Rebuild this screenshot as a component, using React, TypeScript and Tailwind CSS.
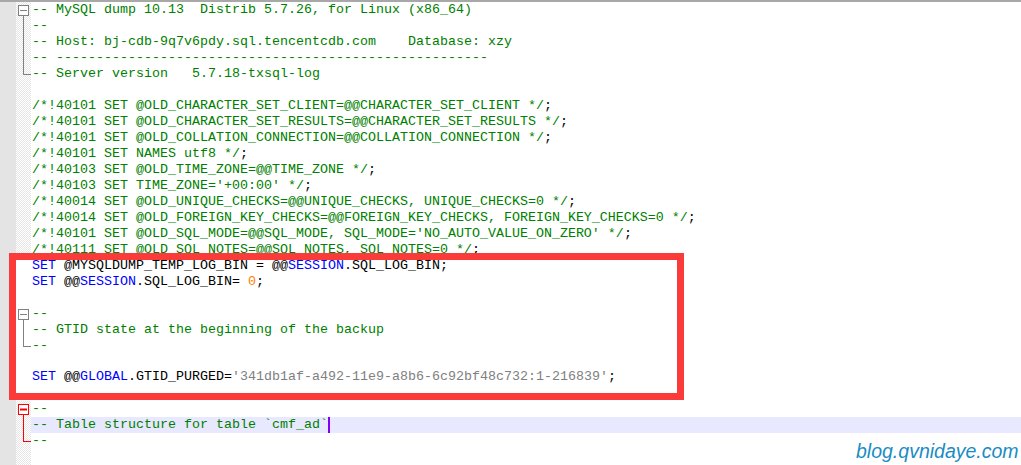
import * as React from "react"

type Seg = [string, string]
type Fold = "none" | "open" | "mid" | "end"

const G = "text-[#008000]"
const B = "text-[#0000ff]"
const K = "text-black"
const O = "text-[#ff8000]"
const S = "text-[#808080]"

const LINES: { segs: Seg[]; fold?: Fold; red?: boolean; clear?: boolean; current?: boolean }[] = [
  { segs: [[G, "-- MySQL dump 10.13  Distrib 5.7.26, for Linux (x86_64)"]], fold: "open" },
  { segs: [[G, "--"]], fold: "mid" },
  { segs: [[G, "-- Host: bj-cdb-9q7v6pdy.sql.tencentcdb.com    Database: xzy"]], fold: "mid" },
  { segs: [[G, "-- ------------------------------------------------------"]], fold: "mid" },
  { segs: [[G, "-- Server version   5.7.18-txsql-log"]], fold: "end" },
  { segs: [] },
  { segs: [[G, "/*!40101 SET @OLD_CHARACTER_SET_CLIENT=@@CHARACTER_SET_CLIENT */"], [K, ";"]] },
  { segs: [[G, "/*!40101 SET @OLD_CHARACTER_SET_RESULTS=@@CHARACTER_SET_RESULTS */"], [K, ";"]] },
  { segs: [[G, "/*!40101 SET @OLD_COLLATION_CONNECTION=@@COLLATION_CONNECTION */"], [K, ";"]] },
  { segs: [[G, "/*!40101 SET NAMES utf8 */"], [K, ";"]] },
  { segs: [[G, "/*!40103 SET @OLD_TIME_ZONE=@@TIME_ZONE */"], [K, ";"]] },
  { segs: [[G, "/*!40103 SET TIME_ZONE='+00:00' */"], [K, ";"]] },
  { segs: [[G, "/*!40014 SET @OLD_UNIQUE_CHECKS=@@UNIQUE_CHECKS, UNIQUE_CHECKS=0 */"], [K, ";"]] },
  { segs: [[G, "/*!40014 SET @OLD_FOREIGN_KEY_CHECKS=@@FOREIGN_KEY_CHECKS, FOREIGN_KEY_CHECKS=0 */"], [K, ";"]] },
  { segs: [[G, "/*!40101 SET @OLD_SQL_MODE=@@SQL_MODE, SQL_MODE='NO_AUTO_VALUE_ON_ZERO' */"], [K, ";"]] },
  { segs: [[G, "/*!40111 SET @OLD_SQL_NOTES=@@SQL_NOTES, SQL_NOTES=0 */"], [K, ";"]] },
  { segs: [[B, "SET"], [K, " @MYSQLDUMP_TEMP_LOG_BIN = @@"], [B, "SESSION"], [K, ".SQL_LOG_BIN;"]], clear: true },
  { segs: [[B, "SET"], [K, " @@"], [B, "SESSION"], [K, ".SQL_LOG_BIN= "], [O, "0"], [K, ";"]], clear: true },
  { segs: [], clear: true },
  { segs: [[G, "--"]], fold: "open", clear: true },
  { segs: [[G, "-- GTID state at the beginning of the backup"]], fold: "mid", clear: true },
  { segs: [[G, "--"]], fold: "end", clear: true },
  { segs: [], clear: true },
  {
    segs: [[B, "SET"], [K, " @@"], [B, "GLOBAL"], [K, ".GTID_PURGED="], [S, "'341db1af-a492-11e9-a8b6-6c92bf48c732:1-216839'"], [K, ";"]],
    clear: true,
  },
  { segs: [], clear: true },
  { segs: [[G, "--"]], fold: "open", red: true },
  { segs: [[G, "-- Table structure for table `cmf_ad`"]], fold: "mid", red: true, current: true },
  { segs: [[G, "--"]], fold: "end", red: true },
  { segs: [] },
]

function FoldMark({ kind, red }: { kind: Fold; red?: boolean }) {
  if (kind === "none") return null
  const c = red ? "#ff0000" : "#808080"
  return (
    <svg width="15" height="16" viewBox="0 0 15 16" className="block">
      {kind === "open" && (
        <>
          <line x1="7.5" y1="13" x2="7.5" y2="16" stroke={c} />
          <rect x="2.5" y="3.5" width="10" height="10" fill="#fff" stroke={c} />
          <line x1="4" y1="8.5" x2="11" y2="8.5" stroke={c} strokeWidth={red ? 2 : 1} />
        </>
      )}
      {kind === "mid" && <line x1="7.5" y1="0" x2="7.5" y2="16" stroke={c} />}
      {kind === "end" && (
        <>
          <line x1="7.5" y1="0" x2="7.5" y2="9" stroke={c} />
          <line x1="7" y1="8.5" x2="15" y2="8.5" stroke={c} />
        </>
      )}
    </svg>
  )
}

export default function App() {
  return (
    <div className="relative w-[1021px] h-[465px] overflow-hidden bg-white border-t-2 border-[#a8a8a8]">
      <div className="flex h-full">
        {/* line number / marker margin */}
        <div className="w-[16px] shrink-0 bg-[#e4e4e4]" />

        <div className="flex-1 flex flex-col font-['Liberation_Mono','Courier_New',monospace] text-[13.33px] leading-[16px]">
          {LINES.map((l, i) => (
            <div key={i} className="flex h-[16px]">
              <div
                className={
                  l.clear
                    ? "w-[15px] shrink-0 bg-white"
                    : "w-[15px] shrink-0 bg-[repeating-conic-gradient(#e6e6e6_0%_25%,#ffffff_0%_50%)] bg-size-[2px_2px]"
                }
              >
                <FoldMark kind={l.fold ?? "none"} red={l.red} />
              </div>
              <div className={l.current ? "flex-1 pl-px whitespace-pre bg-[#e8e8ff]" : "flex-1 pl-px whitespace-pre"}>
                {l.segs.map(([cls, t], j) => (
                  <span key={j} className={cls}>
                    {t}
                  </span>
                ))}
                {l.current && <span className="inline-block w-[2px] h-[16px] align-top bg-[#8000ff]" />}
              </div>
            </div>
          ))}
          <div className="flex flex-1">
            <div className="w-[15px] shrink-0 bg-[repeating-conic-gradient(#e6e6e6_0%_25%,#ffffff_0%_50%)] bg-size-[2px_2px]" />
          </div>
        </div>
      </div>

      {/* annotation box */}
      <div className="absolute left-[9px] top-[251px] w-[675px] h-[147px] border-[7px] border-[#fb3a3a]" />

      {/* watermark */}
      <div className="absolute left-[856px] top-[440px] text-[19.5px] leading-none italic text-[#1a8cc4] font-['Liberation_Sans',Arial,sans-serif]">
        blog.qvnidaye.com
      </div>
    </div>
  )
}
